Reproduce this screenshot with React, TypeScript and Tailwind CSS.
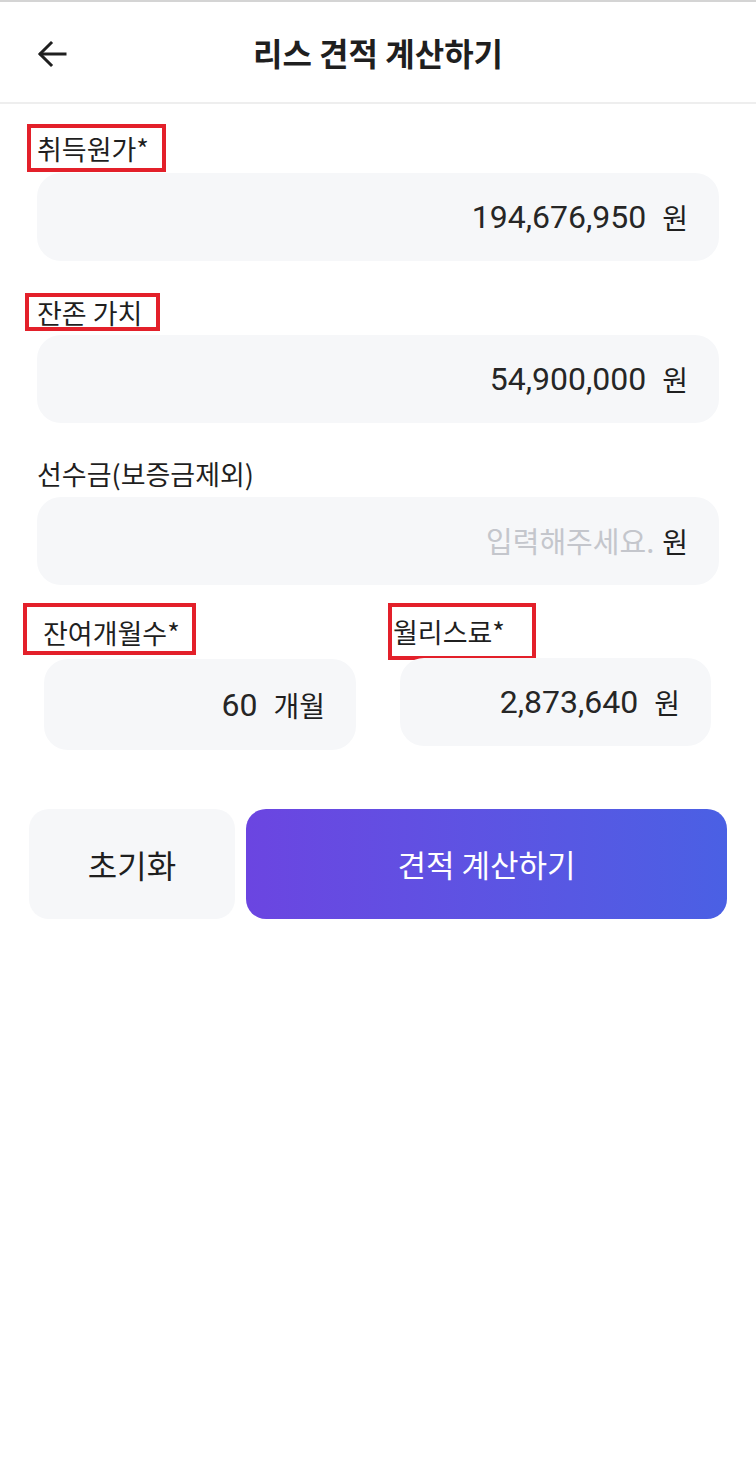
import React from "react";

const FONT = { fontFamily: '"Noto Sans CJK KR", "Noto Sans", sans-serif' };
const NUM_FONT = { fontFamily: 'Roboto, "Noto Sans CJK KR", sans-serif' };

function ValueBox({ value, unit, placeholder, className = "" }: { value?: string; unit: string; placeholder?: string; className?: string }) {
  return (
    <div className={`flex items-center justify-end rounded-[24px] bg-[#f6f7f9] pr-[31px] text-[28px] text-[#1f1f1f] ${className}`}>
      {value ? (
        <span className="text-[32px] text-[#262626]" style={NUM_FONT}>{value}</span>
      ) : (
        <span className="text-[29px] text-[#c4c6cc]">{placeholder}</span>
      )}
      <span className={value ? "ml-[16px]" : "ml-[8px]"}>{unit}</span>
    </div>
  );
}

function MarkedLabel({ text, className = "" }: { text: string; className?: string }) {
  return (
    <div className={`flex items-center border-4 border-[#e3202a] text-[27px] leading-none text-[#1f1f1f] ${className}`}>
      {text}
    </div>
  );
}

export default function App() {
  return (
    <div className="min-h-[1481px] w-[756px] bg-white" style={FONT}>
      <header className="relative flex h-[104px] items-center justify-center border-t-2 border-b-2 border-t-[#d4d4d4] border-b-[#eeeeee]">
        <button className="absolute left-[34px] top-[34px] p-[2px]">
          <svg width="32" height="32" viewBox="0 0 32 32" fill="none" stroke="#1f1f1f" strokeWidth="3" strokeLinecap="square">
            <path d="M29 16H5" />
            <path d="M15 5L4 16l11 11" />
          </svg>
        </button>
        <h1 className="text-[32px] font-bold text-[#1f1f1f]">리스 견적 계산하기</h1>
      </header>

      <div className="px-[37px]">
        <MarkedLabel text="취득원가*" className="ml-[-10px] mt-[20px] h-[48px] w-[139px] pl-[6px]" />
        <ValueBox value="194,676,950" unit="원" className="mt-[1px] h-[88px]" />

        <MarkedLabel text="잔존 가치" className="ml-[-12px] mt-[32px] h-[38px] w-[135px] pl-[8px]" />
        <ValueBox value="54,900,000" unit="원" className="mt-[4px] h-[88px]" />

        <div className="mt-[34px] flex h-[34px] items-center text-[27px] text-[#1f1f1f]">선수금(보증금제외)</div>
        <ValueBox placeholder="입력해주세요." unit="원" className="mt-[6px] h-[88px]" />
      </div>

      <div className="mt-[18px] flex pl-[23px]">
        <div className="w-[365px]">
          <MarkedLabel text="잔여개월수*" className="h-[52px] w-[173px] pl-[16px] pt-[6px]" />
          <ValueBox value="60" unit="개월" className="ml-[21px] mt-[4px] h-[91px] w-[312px]" />
        </div>
        <div>
          <MarkedLabel text="월리스료*" className="h-[57px] w-[148px] pl-[1px]" />
          <ValueBox value="2,873,640" unit="원" className="ml-[12px] mt-[-2px] h-[88px] w-[311px]" />
        </div>
      </div>

      <div className="mt-[59px] flex gap-[11px] px-[29px]">
        <button className="flex h-[110px] w-[206px] items-center justify-center rounded-[20px] bg-[#f6f7f9] text-[32px] text-[#1f1f1f]">
          초기화
        </button>
        <button className="flex h-[110px] flex-1 items-center justify-center rounded-[20px] bg-gradient-to-r from-[#6b45e1] to-[#4a60e4] text-[31px] text-white">
          견적 계산하기
        </button>
      </div>
    </div>
  );
}
